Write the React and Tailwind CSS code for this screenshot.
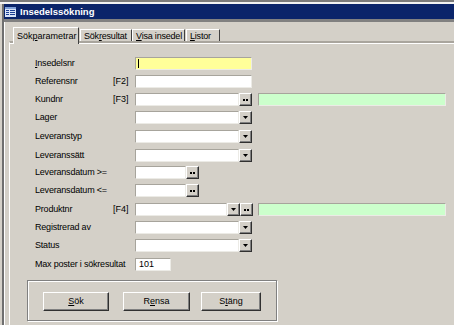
import React from 'react';

const rows = [
  { label: 'Insedelsnr', ul: 0, h: 'h-[18px]', type: 'yellow' },
  { label: 'Referensnr', fkey: '[F2]', h: 'h-[18px]', type: 'text' },
  { label: 'Kundnr', fkey: '[F3]', h: 'h-[18px]', type: 'lookup' },
  { label: 'Lager', h: 'h-[19px]', type: 'combo' },
  { label: 'Leveranstyp', h: 'h-[19px]', type: 'combo' },
  { label: 'Leveranssätt', h: 'h-[17px]', type: 'combo' },
  { label: 'Leveransdatum >=', h: 'h-[18px]', type: 'date' },
  { label: 'Leveransdatum <=', h: 'h-[19px]', type: 'date' },
  { label: 'Produktnr', fkey: '[F4]', h: 'h-[18px]', type: 'combolookup' },
  { label: 'Registrerad av', h: 'h-[18px]', type: 'combo' },
  { label: 'Status', h: 'h-[19px]', type: 'combo' },
  { label: 'Max poster i sökresultat', h: 'h-[22px]', type: 'max' },
];

function Ul({ text, at }) {
  if (at == null) return text;
  return (
    <>
      {text.slice(0, at)}
      <span className="underline underline-offset-[1px]">{text[at]}</span>
      {text.slice(at + 1)}
    </>
  );
}

function SmallBtn({ kind }) {
  return (
    <div className="w-[13px] h-[13px] shrink-0 flex items-center justify-center bg-[#d4d0c8] border-t border-l border-t-white border-l-white border-r border-b border-r-[#303030] border-b-[#303030] shadow-[inset_-1px_-1px_0_#808080]">
      {kind === 'arrow' ? (
        <svg width="5" height="3" viewBox="0 0 5 3"><path d="M0 0h5L2.5 3z" fill="#000" /></svg>
      ) : (
        <svg width="5" height="2" viewBox="0 0 5 2"><rect x="0" y="0" width="2" height="2" fill="#000" /><rect x="3" y="0" width="2" height="2" fill="#000" /></svg>
      )}
    </div>
  );
}

const box = 'h-[13px] border border-t-[#a7a49c] border-l-[#a7a49c] border-r-[#ecebe6] border-b-[#ecebe6]';

function Control({ type }) {
  if (type === 'yellow')
    return (
      <div className={`${box} w-[117px] bg-[#ffff99] flex items-center pl-[2px]`}>
        <div className="w-[1px] h-[9px] bg-black" />
      </div>
    );
  if (type === 'text') return <div className={`${box} w-[117px] bg-white`} />;
  if (type === 'combo')
    return (
      <div className="flex">
        <div className={`${box} w-[104px] bg-white`} />
        <SmallBtn kind="arrow" />
      </div>
    );
  if (type === 'date')
    return (
      <div className="flex">
        <div className={`${box} w-[51px] bg-white`} />
        <SmallBtn kind="dots" />
      </div>
    );
  if (type === 'lookup')
    return (
      <div className="flex">
        <div className={`${box} w-[104px] bg-white`} />
        <SmallBtn kind="dots" />
        <div className={`${box} w-[188px] ml-[6px] bg-[#ccffcc]`} />
      </div>
    );
  if (type === 'combolookup')
    return (
      <div className="flex">
        <div className={`${box} w-[92px] bg-white`} />
        <SmallBtn kind="arrow" />
        <SmallBtn kind="dots" />
        <div className={`${box} w-[188px] ml-[5px] bg-[#ccffcc]`} />
      </div>
    );
  return (
    <div className={`${box} w-[36px] bg-white flex items-center pl-[3px]`}>101</div>
  );
}

function Button({ label, ul, w }) {
  return (
    <div className={`${w} h-[19px] flex items-center justify-center bg-[#d4d0c8] border-t border-l border-t-white border-l-white border-r border-b border-r-[#303030] border-b-[#303030] shadow-[inset_-1px_-1px_0_#808080]`}>
      <span><Ul text={label} at={ul} /></span>
    </div>
  );
}

const tab = 'h-[12px] whitespace-nowrap overflow-hidden tracking-[-0.2px] border-t border-l border-t-white border-l-white border-r border-r-[#404040] pl-[3px] pt-[2px]';

export default function App() {
  return (
    <div className="w-[454px] h-[325px] overflow-hidden bg-[#d4d0c8] text-[9px] leading-none text-black [font-family:'Liberation_Sans',Arial,sans-serif] flex flex-col">
      <div className="h-[2px] shrink-0 bg-[#7b7b7b]" />
      <div className="h-[2px] shrink-0 bg-[#f2f2f2]" />
      <div className="flex flex-1 min-h-0">
        <div className="w-[2px] shrink-0 bg-[#d4d0c8]" />
        <div className="w-[2px] shrink-0 bg-[#6f6f6f]" />
        <div className="flex-1 min-w-0 flex flex-col">
          {/* title bar */}
          <div className="h-[15px] shrink-0 bg-[#0a246a] flex items-center pl-[1px] gap-[4px]">
            <svg width="11" height="10" viewBox="0 0 11 10">
              <rect x="0" y="0" width="11" height="10" fill="#d8e4f8" />
              <rect x="0" y="0" width="11" height="2" fill="#7fa0d8" />
              <rect x="1" y="3" width="3" height="1" fill="#1c3f94" />
              <rect x="5" y="3" width="5" height="1" fill="#1c3f94" />
              <rect x="1" y="5" width="3" height="1" fill="#1c3f94" />
              <rect x="5" y="5" width="5" height="1" fill="#1c3f94" />
              <rect x="1" y="7" width="3" height="1" fill="#1c3f94" />
              <rect x="5" y="7" width="5" height="1" fill="#1c3f94" />
            </svg>
            <span className="text-white font-bold text-[9.5px]">Insedelssökning</span>
          </div>
          <div className="h-[3px] shrink-0 bg-[#808080]" />
          <div className="flex-1 min-h-0 border-l border-l-white pl-[4px] flex flex-col">
            {/* tabs */}
            <div className="h-[19px] shrink-0 flex items-end pl-[4px]">
              <div className="relative z-10 -mb-[3px] w-[66px] h-[17px] whitespace-nowrap bg-[#d4d0c8] border-t border-l border-t-white border-l-white border-r border-r-[#404040] pl-[3px] pt-[4px]">
                <Ul text="Sökparametrar" at={3} />
              </div>
              <div className={`ml-[1px] w-[52px] ${tab}`}>
                <Ul text="Sökresultat" at={3} />
              </div>
              <div className={`w-[53px] ${tab}`}>
                <Ul text="Visa insedel" at={0} />
              </div>
              <div className={`ml-[1px] w-[34px] ${tab}`}>
                <Ul text="Listor" at={0} />
              </div>
            </div>
            {/* panel */}
            <div className="flex-1 min-h-0 border-t-2 border-t-[#a9a59d] border-l border-l-white">
              <div className="h-full border-t border-t-white pl-[25px] pt-[13px]">
                {rows.map((r) => (
                  <div key={r.label} className={`${r.h} flex items-start`}>
                    <div className="w-[78px] h-[13px] shrink-0 flex items-center whitespace-nowrap tracking-[-0.2px]">
                      <Ul text={r.label} at={r.ul} />
                    </div>
                    <div className="w-[22px] h-[13px] shrink-0 flex items-center">{r.fkey}</div>
                    <Control type={r.type} />
                  </div>
                ))}
                {/* button group */}
                <div className="-ml-[8px] w-[250px] h-[41px] border border-[#808080] shadow-[inset_1px_1px_0_#fff,1px_1px_0_#fff] pl-[15px] pt-[11px] flex items-start">
                  <Button label="Sök" ul={0} w="w-[66px]" />
                  <div className="w-[14px]" />
                  <Button label="Rensa" ul={1} w="w-[67px]" />
                  <div className="w-[11px]" />
                  <Button label="Stäng" ul={1} w="w-[60px]" />
                </div>
              </div>
            </div>
          </div>
        </div>
      </div>
    </div>
  );
}
